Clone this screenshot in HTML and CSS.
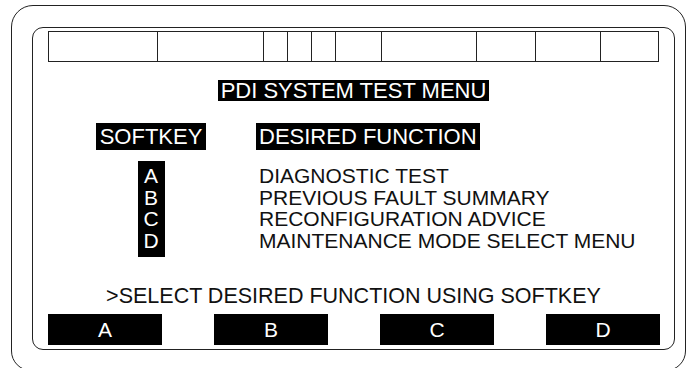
FILE: index.html
```html
<!DOCTYPE html>
<html lang="en">
<head>
    <meta charset="UTF-8">
    <meta name="viewport" content="width=device-width, initial-scale=1.0">
    <title>PDI System Test Menu</title>
    <link rel="stylesheet" href="styles.css">
</head>
<body>
    <div class="bezel">
        <div class="screen">
            <!-- status cells along the top -->
            <div class="status">
                <span></span><span></span><span></span><span></span><span></span>
                <span></span><span></span><span></span><span></span><span></span>
            </div>

            <h1 class="title">PDI SYSTEM TEST MENU</h1>

            <div class="menu">
                <div class="head head-key">SOFTKEY</div>
                <div class="head head-func">DESIRED FUNCTION</div>
                <ul class="keys-col">
                    <li>A</li>
                    <li>B</li>
                    <li>C</li>
                    <li>D</li>
                </ul>
                <ul class="funcs">
                    <li>DIAGNOSTIC TEST</li>
                    <li>PREVIOUS FAULT SUMMARY</li>
                    <li>RECONFIGURATION ADVICE</li>
                    <li>MAINTENANCE MODE SELECT MENU</li>
                </ul>
            </div>

            <p class="prompt">&gt;SELECT DESIRED FUNCTION USING SOFTKEY</p>

            <div class="softkeys">
                <div class="softkey">A</div>
                <div class="softkey">B</div>
                <div class="softkey">C</div>
                <div class="softkey">D</div>
            </div>
        </div>
    </div>
</body>
</html>
```

FILE: styles.css
```css
html, body {
    margin: 0;
    padding: 0;
    background: #fff;
    overflow: hidden;
}
body {
    font-family: "Liberation Sans", Arial, sans-serif;
    color: #111;
    padding: 5px 0 0 11px;
}
.bezel {
    width: 675px;
    height: 366px;
    box-sizing: border-box;
    border: 1px solid #222;
    border-radius: 22px 22px 20px 20px;
}
.screen {
    width: 643px;
    height: 323px;
    margin: 21px 0 0 20px;
    box-sizing: border-box;
    border: 1px solid #222;
    border-radius: 11px;
    padding: 3px 0 0 15px;
    display: flex;
    flex-direction: column;
}
.status {
    width: 611px;
    height: 31px;
    box-sizing: border-box;
    border: 1px solid #222;
    display: grid;
    grid-template-columns: 109px 106px 24px 24px 24px 46px 95px 59px 65px 1fr;
}
.status span {
    border-right: 1px solid #222;
}
.status span:last-child {
    border-right: none;
}
.title {
    align-self: center;
    margin: 18px 0 0 -15px;
    padding: 0 3px;
    background: #000;
    color: #fff;
    font-size: 22px;
    font-weight: normal;
    line-height: 21px;
}
.menu {
    display: grid;
    grid-template-columns: 112px auto;
    column-gap: 49px;
    row-gap: 11px;
    margin: 22px 0 0 47px;
}
.head {
    background: #000;
    color: #fff;
    font-size: 22px;
    line-height: 27px;
    padding: 0 3px;
    justify-self: start;
}
.head-key {
    justify-self: center;
    padding: 0 4px;
}
.keys-col, .funcs {
    list-style: none;
    margin: 0;
    padding: 4px 0 5px;
    font-size: 21px;
    line-height: 21.7px;
}
.keys-col {
    justify-self: center;
    width: 27px;
    background: #000;
    color: #fff;
    text-align: center;
}
.funcs {
    padding-left: 3px;
}
.prompt {
    margin: 29px 0 0 -15px;
    text-align: center;
    font-size: 21.5px;
    line-height: 21px;
}
.softkeys {
    display: flex;
    gap: 52px;
    margin-top: 7px;
}
.softkey {
    width: 114px;
    height: 31px;
    background: #000;
    color: #fff;
    font-size: 21px;
    line-height: 31px;
    text-align: center;
}
```
